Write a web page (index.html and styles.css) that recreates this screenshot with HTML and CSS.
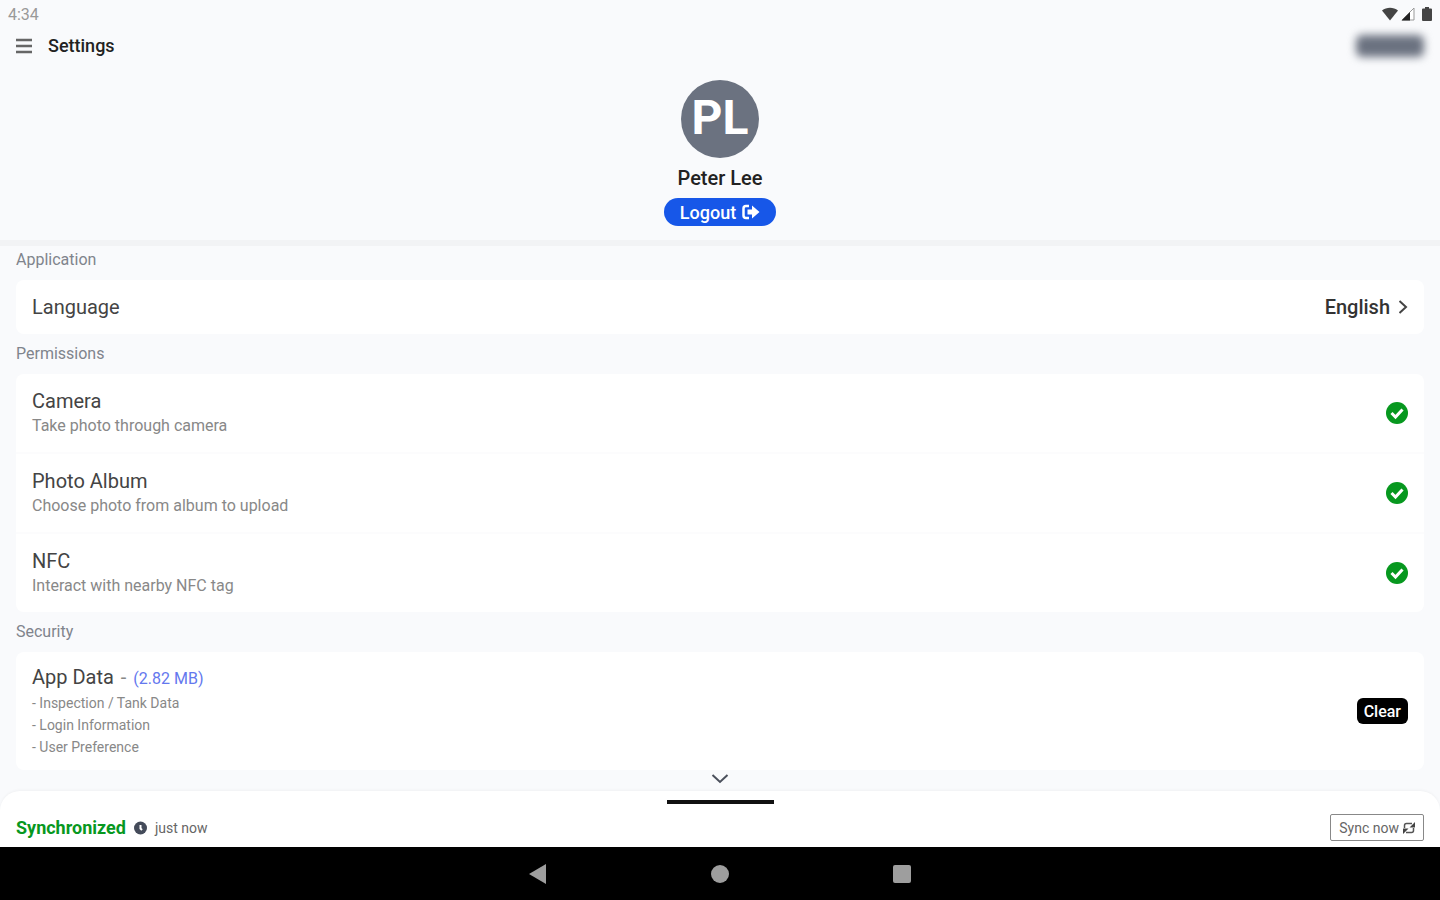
FILE: index.html
```html
<!DOCTYPE html>
<html lang="en">
<head>
  <meta charset="UTF-8">
  <meta name="viewport" content="width=device-width, initial-scale=1.0">
  <title>Settings</title>
  <link rel="stylesheet" href="styles.css">
</head>
<body>
  <div class="status-bar">
    <span>4:34</span>
    <div class="status-icons">
      <svg width="16" height="14" viewBox="0 0 16 14"><path d="M0 3.5C4.5-.2 11.500-.2 16 3.500L8 13.500z" fill="#444"/></svg>
      <svg width="14" height="14" viewBox="0 0 14 14"><path d="M13 1v12H1z" fill="#fff" stroke="#999"/><path d="M9 5V13.500H.5z" fill="#222"/></svg>
      <svg class="battery" width="10" height="14" viewBox="0 0 10 14"><path d="M3 0h4v1.500h2q1 0 1 1V13q0 1-1 1H1q-1 0-1-1V2.500q0-1 1-1h2z" fill="#444"/></svg>
    </div>
  </div>

  <header class="app-bar">
    <button class="menu" aria-label="Menu">
      <svg width="16" height="16" viewBox="0 0 16 16"><path d="M0 2h16M0 8h16M0 14h16" stroke="#666" stroke-width="2.500"/></svg>
    </button>
    <h1>Settings</h1>
    <div class="hidden-id"></div>
  </header>

  <section class="profile">
    <div class="avatar">PL</div>
    <h2>Peter Lee</h2>
    <button class="logout">Logout
      <svg width="18" height="16" viewBox="0 0 18 16"><path d="M7 2H4Q1.500 2 1.500 4.500V11.500Q1.500 14 4 14H7" fill="none" stroke="#fff" stroke-width="2.500"/><path d="M5.500 5.500H10V1.500L17.500 8 10 14.500V10.500H5.500z" fill="#fff"/></svg>
    </button>
  </section>

  <main class="settings">
    <h3>Application</h3>
    <div class="card">
      <div class="row language">
        <span class="name">Language</span>
        <button class="picker">English
          <svg width="10" height="16" viewBox="0 0 10 16"><path d="M1.500 2L8 8l-6.500 6" fill="none" stroke="#444" stroke-width="2"/></svg>
        </button>
      </div>
    </div>

    <h3>Permissions</h3>
    <div class="card">
      <div class="row">
        <div>
          <div class="name">Camera</div>
          <p>Take photo through camera</p>
        </div>
        <svg class="check" width="22" height="22" viewBox="0 0 22 22"><circle cx="11" cy="11" r="11" fill="#07981f"/><path d="M5.500 11l4 4 7-7.500" fill="none" stroke="#fff" stroke-width="3"/></svg>
      </div>
      <div class="row">
        <div>
          <div class="name">Photo Album</div>
          <p>Choose photo from album to upload</p>
        </div>
        <svg class="check" width="22" height="22" viewBox="0 0 22 22"><circle cx="11" cy="11" r="11" fill="#07981f"/><path d="M5.500 11l4 4 7-7.500" fill="none" stroke="#fff" stroke-width="3"/></svg>
      </div>
      <div class="row">
        <div>
          <div class="name">NFC</div>
          <p>Interact with nearby NFC tag</p>
        </div>
        <svg class="check" width="22" height="22" viewBox="0 0 22 22"><circle cx="11" cy="11" r="11" fill="#07981f"/><path d="M5.500 11l4 4 7-7.500" fill="none" stroke="#fff" stroke-width="3"/></svg>
      </div>
    </div>

    <h3>Security</h3>
    <div class="card">
      <div class="row app-data">
        <div>
          <div class="name">App Data <span class="dash">-</span> <span class="size">(2.82 MB)</span></div>
          <ul>
            <li>- Inspection / Tank Data</li>
            <li>- Login Information</li>
            <li>- User Preference</li>
          </ul>
        </div>
        <button class="clear">Clear</button>
      </div>
    </div>
  </main>

  <footer class="sync">
    <button class="expand" aria-label="Scroll down">
      <svg width="18" height="12" viewBox="0 0 18 12"><path d="M1.500 2L9 9l7.500-7" fill="none" stroke="#4b505c" stroke-width="2"/></svg>
    </button>
    <div class="handle"></div>
    <div class="sync-row">
      <strong>Synchronized</strong>
      <svg width="13" height="14" viewBox="0 0 13 14"><circle cx="6.500" cy="7" r="6.500" fill="#444b5a"/><path d="M6.500 4v3.500l1.500 1.500" fill="none" stroke="#fff" stroke-width="2"/></svg>
      <span>just now</span>
      <button class="sync-now">Sync now
        <svg width="12" height="12" viewBox="0 0 12 12"><path d="M1.500 6V3.500Q1.500 1.500 3.500 1.500H9M10.500 6V8.500Q10.500 10.500 8.500 10.500H3" fill="none" stroke="#555" stroke-width="1.500"/><path d="M12 0v5.500H6.500zM0 12V6.500H5.500z" fill="#444"/></svg>
      </button>
    </div>
  </footer>

  <nav class="nav-bar">
    <button aria-label="Back"><svg width="20" height="20" viewBox="0 0 20 20"><path d="M1 10L18 0v20z" fill="#9e9e9e"/></svg></button>
    <button aria-label="Home"><svg width="20" height="20" viewBox="0 0 20 20"><circle cx="10" cy="10" r="9" fill="#9e9e9e"/></svg></button>
    <button aria-label="Recent apps"><svg width="20" height="20" viewBox="0 0 20 20"><rect x="1" y="1" width="18" height="18" rx="2" fill="#9e9e9e"/></svg></button>
  </nav>
</body>
</html>
```

FILE: styles.css
```css
*{
  box-sizing: border-box;
}
body{
  margin: 0;
  height: 100vh;
  display: flex;
  flex-direction: column;
  background: #f9fafc;
  color: #444;
  font-family: Roboto, sans-serif;
}
h1, h2, h3, p, ul{
  margin: 0;
  padding: 0;
  font-weight: 400;
}
button{
  border: 0;
  padding: 0;
  background: none;
  color: inherit;
  font-family: inherit;
  display: flex;
  align-items: center;
  cursor: pointer;
}
svg{
  display: block;
  flex: none;
}
.status-bar{
  display: flex;
  justify-content: space-between;
  align-items: center;
  height: 28px;
  padding: 0 8px;
  font-size: 16px;
  color: #999;
}
.status-icons{
  display: flex;
  gap: 3px;
}
.battery{
  margin-left: 4px;
}
.app-bar{
  display: flex;
  align-items: center;
  gap: 16px;
  height: 36px;
  padding: 0 16px;
}
.app-bar h1{
  font-size: 18px;
  line-height: 22px;
  font-weight: 500;
  color: #222;
}
.hidden-id{
  width: 68px;
  height: 22px;
  margin-left: auto;
  border-radius: 6px;
  background: #6b7280;
  filter: blur(4px);
}
.profile{
  display: flex;
  flex-direction: column;
  align-items: center;
  padding: 16px 0 14px;
  border-bottom: 6px solid #f2f3f5;
}
.avatar{
  width: 78px;
  height: 78px;
  border-radius: 50%;
  background: #6b7280;
  color: #fff;
  font-size: 48px;
  line-height: 76px;
  font-weight: 700;
  text-align: center;
}
.profile h2{
  margin: 8px 0;
  font-size: 20px;
  line-height: 24px;
  font-weight: 500;
  color: #222;
}
.logout{
  gap: 6px;
  height: 28px;
  padding: 0 16px;
  border-radius: 14px;
  background: #1757e8;
  color: #fff;
  font-size: 18px;
  font-weight: 500;
}
.settings{
  flex: 1;
  min-height: 0;
  overflow: hidden;
  display: flex;
  flex-direction: column;
  gap: 10px;
  padding: 4px 16px;
}
.settings h3{
  font-size: 16px;
  line-height: 20px;
  color: #80848c;
}
.card{
  flex: none;
  display: grid;
  gap: 2px;
  border-radius: 8px;
  background: #fcfcfd;
  overflow: hidden;
}
.row{
  display: flex;
  justify-content: space-between;
  align-items: center;
  min-height: 78px;
  padding: 0 16px;
  background: #fff;
}
.language{
  min-height: 54px;
}
.name{
  font-size: 20px;
  line-height: 26px;
}
.row p{
  font-size: 16px;
  line-height: 24px;
  color: #888;
}
.picker{
  gap: 8px;
  font-size: 20px;
  font-weight: 500;
  color: #333;
}
.app-data{
  min-height: 118px;
}
.dash{
  margin: 0 2px;
  color: #888;
}
.size{
  font-size: 16px;
  color: #6478ee;
}
.app-data ul{
  list-style: none;
  font-size: 14px;
  line-height: 22px;
  color: #888;
}
.clear{
  height: 26px;
  padding: 0 7px;
  border-radius: 6px;
  background: #000;
  color: #fff;
  font-size: 16px;
  font-weight: 500;
}
.sync{
  position: relative;
  padding: 9px 16px 6px;
  border-radius: 20px 20px 0 0;
  background: #fff;
  box-shadow: 0 -1px 3px rgba(0, 0, 0, 0.04);
}
.expand{
  position: absolute;
  bottom: 100%;
  left: 50%;
  height: 24px;
  transform: translateX(-50%);
}
.handle{
  width: 107px;
  height: 4px;
  margin: 0 auto 10px;
  background: #111;
}
.sync-row{
  display: flex;
  align-items: center;
  gap: 8px;
  font-size: 14px;
  color: #666;
}
.sync-row strong{
  font-size: 18px;
  font-weight: 700;
  color: #07981f;
}
.sync-now{
  gap: 4px;
  height: 27px;
  margin-left: auto;
  padding: 0 8px;
  border: 1px solid #888;
  border-radius: 2px;
  background: #fff;
  font-size: 14px;
}
.nav-bar{
  display: flex;
  justify-content: center;
  gap: 162px;
  height: 53px;
  background: #000;
}
```
